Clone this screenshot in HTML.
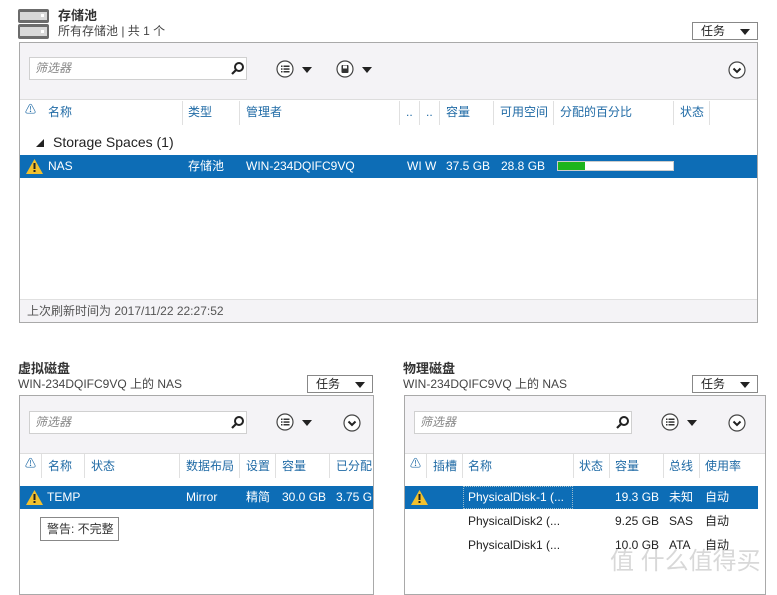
<!DOCTYPE html>
<html><head><meta charset="utf-8"><style>
*{margin:0;padding:0;box-sizing:border-box}
body{width:777px;height:582px;background:#fff;position:relative;overflow:hidden;font-family:"Liberation Sans","Noto Sans CJK SC",sans-serif;font-size:12px;line-height:15px;color:#222}
.a{position:absolute;white-space:nowrap}
.panel{position:absolute;border:1px solid #a9a9a9;background:#fff}
.tb{position:absolute;left:0;right:0;top:0;background:#f4f3f6;border-bottom:1px solid #ddd}
.filter{position:absolute;background:#fff;border:1px solid #d0d0d0;height:23px;color:#888;font-style:italic;padding:3px 0 0 5px;font-size:12px}
.hd{color:#1f6aa5;font-size:12px}
.sel{position:absolute;background:#0d6db6;height:23px;color:#fff}
.task{position:absolute;border:1px solid #888;height:18px;background:#fff;font-size:12px;line-height:15px;padding:1px 0 0 8px}
.task:after{content:"";position:absolute;right:7px;top:6px;border:5px solid transparent;border-top:6px solid #222;border-bottom:0}
.tri{position:absolute;border:5px solid transparent;border-top:6px solid #222;border-bottom:0}
.sep{position:absolute;width:1px;background:#e0e0e0}
</style></head><body>

<svg width="0" height="0" style="position:absolute"><defs>
<g id="list"><circle cx="9" cy="9" r="8" fill="#fff" stroke="#444" stroke-width="1.2"/><rect x="5" y="5.5" width="1.5" height="1.5" fill="#333"/><rect x="5" y="8.3" width="1.5" height="1.5" fill="#333"/><rect x="5" y="11" width="1.5" height="1.5" fill="#333"/><rect x="7.5" y="5.5" width="6" height="1.5" fill="#333"/><rect x="7.5" y="8.3" width="6" height="1.5" fill="#333"/><rect x="7.5" y="11" width="6" height="1.5" fill="#333"/></g>
<g id="down"><circle cx="9" cy="9" r="8" fill="#fff" stroke="#444" stroke-width="1.2"/><path d="M5.5 7.5L9 11L12.5 7.5" fill="none" stroke="#222" stroke-width="2"/></g>
<g id="save"><circle cx="9" cy="9" r="8" fill="#fff" stroke="#444" stroke-width="1.2"/><rect x="5.5" y="5" width="7" height="8" rx="1" fill="#333"/><rect x="7" y="5.5" width="4" height="3" fill="#fff"/></g>
<g id="mag"><circle cx="8" cy="5" r="4" fill="none" stroke="#222" stroke-width="2"/><line x1="5" y1="8" x2="1" y2="12" stroke="#222" stroke-width="2.2"/></g>
<g id="warn"><path d="M8.5 0L17 15H0Z" fill="#f2c12e"/><rect x="7.5" y="4" width="2" height="6" fill="#222"/><rect x="7.5" y="11" width="2" height="2" fill="#222"/></g>
</defs></svg>

<svg class="a" style="left:18px;top:8px" width="32" height="32" viewBox="0 0 32 32">
<rect x="0" y="1" width="31" height="14" rx="2" fill="#6b6b6b"/><rect x="2" y="4" width="27" height="8" fill="#d8d8d8"/><rect x="23" y="6" width="3" height="3" fill="#fff"/>
<rect x="0" y="16" width="31" height="15" rx="2" fill="#6b6b6b"/><rect x="2" y="19" width="27" height="9" fill="#d8d8d8"/><rect x="23" y="22" width="3" height="3" fill="#fff"/>
</svg>
<div class="a" style="left:58px;top:8px;font-size:13px;font-weight:bold;color:#333">存储池</div>
<div class="a" style="left:58px;top:24px;color:#444">所有存储池 | 共 1 个</div>
<div class="task" style="left:692px;top:22px;width:66px">任务</div>

<div class="panel" style="left:19px;top:42px;width:739px;height:281px">
 <div class="tb" style="height:57px"></div>
 <div class="filter" style="left:9px;top:14px;width:218px">筛选器</div>
 <svg class="a" style="left:211px;top:19px" width="14" height="14"><use href="#mag"/></svg>
 <svg class="a" style="left:256px;top:17px" width="18" height="18"><use href="#list"/></svg>
 <div class="tri" style="left:282px;top:24px"></div>
 <svg class="a" style="left:316px;top:17px" width="18" height="18"><use href="#save"/></svg>
 <div class="tri" style="left:342px;top:24px"></div>
 <svg class="a" style="left:708px;top:18px" width="18" height="18"><use href="#down"/></svg>
 <div class="a" style="left:5px;top:60px;font-size:11px;color:#1f6aa5">⚠</div>
 <div class="hd a" style="left:28px;top:62px">名称</div>
 <div class="sep" style="left:162px;top:58px;height:24px"></div>
 <div class="hd a" style="left:168px;top:62px">类型</div>
 <div class="sep" style="left:219px;top:58px;height:24px"></div>
 <div class="hd a" style="left:226px;top:62px">管理者</div>
 <div class="sep" style="left:379px;top:58px;height:24px"></div>
 <div class="hd a" style="left:386px;top:62px">..</div>
 <div class="sep" style="left:399px;top:58px;height:24px"></div>
 <div class="hd a" style="left:406px;top:62px">..</div>
 <div class="sep" style="left:419px;top:58px;height:24px"></div>
 <div class="hd a" style="left:426px;top:62px">容量</div>
 <div class="sep" style="left:473px;top:58px;height:24px"></div>
 <div class="hd a" style="left:480px;top:62px">可用空间</div>
 <div class="sep" style="left:533px;top:58px;height:24px"></div>
 <div class="hd a" style="left:540px;top:62px">分配的百分比</div>
 <div class="sep" style="left:653px;top:58px;height:24px"></div>
 <div class="hd a" style="left:660px;top:62px">状态</div>
 <div class="sep" style="left:689px;top:58px;height:24px"></div>
 <div class="a" style="left:16px;top:93px;font-size:8px">◢</div>
 <div class="a" style="left:33px;top:91px;font-size:14px;line-height:17px;color:#222">Storage Spaces (1)</div>
 <div class="sel" style="left:0;top:112px;width:737px">
  <svg class="a" style="left:6px;top:4px" width="17" height="15"><use href="#warn"/></svg>
  <div class="a" style="left:28px;top:4px">NAS</div>
  <div class="a" style="left:168px;top:4px">存储池</div>
  <div class="a" style="left:226px;top:4px">WIN-234DQIFC9VQ</div>
  <div class="a" style="left:387px;top:4px">WI W</div>
  <div class="a" style="left:426px;top:4px">37.5 GB</div>
  <div class="a" style="left:481px;top:4px">28.8 GB</div>
  <div class="a" style="left:537px;top:6px;width:117px;height:10px;background:#fff;border:1px solid #ccc"><div style="width:27px;height:8px;background:#1db51d"></div></div>
 </div>
 <div class="a" style="left:0;right:0;top:256px;height:23px;background:#f4f3f6;border-top:1px solid #e0e0e0"></div>
 <div class="a" style="left:7px;top:261px;color:#555">上次刷新时间为 2017/11/22 22:27:52</div>
</div>

<div class="a" style="left:18px;top:361px;font-size:13px;font-weight:bold;color:#333">虚拟磁盘</div>
<div class="a" style="left:18px;top:377px;color:#444">WIN-234DQIFC9VQ 上的 NAS</div>
<div class="task" style="left:307px;top:375px;width:66px">任务</div>
<div class="panel" style="left:19px;top:395px;width:355px;height:200px">
 <div class="tb" style="height:58px"></div>
 <div class="filter" style="left:9px;top:15px;width:218px">筛选器</div>
 <svg class="a" style="left:211px;top:20px" width="14" height="14"><use href="#mag"/></svg>
 <svg class="a" style="left:256px;top:17px" width="18" height="18"><use href="#list"/></svg>
 <div class="tri" style="left:282px;top:24px"></div>
 <svg class="a" style="left:323px;top:18px" width="18" height="18"><use href="#down"/></svg>
 <div class="a" style="left:5px;top:61px;font-size:11px;color:#1f6aa5">⚠</div>
 <div class="sep" style="left:21px;top:58px;height:24px"></div>
 <div class="hd a" style="left:28px;top:63px">名称</div>
 <div class="sep" style="left:64px;top:58px;height:24px"></div>
 <div class="hd a" style="left:71px;top:63px">状态</div>
 <div class="sep" style="left:159px;top:58px;height:24px"></div>
 <div class="hd a" style="left:166px;top:63px">数据布局</div>
 <div class="sep" style="left:219px;top:58px;height:24px"></div>
 <div class="hd a" style="left:226px;top:63px">设置</div>
 <div class="sep" style="left:255px;top:58px;height:24px"></div>
 <div class="hd a" style="left:262px;top:63px">容量</div>
 <div class="sep" style="left:309px;top:58px;height:24px"></div>
 <div class="hd a" style="left:316px;top:63px">已分配</div>
 <div class="sel" style="left:0;top:90px;width:353px">
  <svg class="a" style="left:6px;top:4px" width="17" height="15"><use href="#warn"/></svg>
  <div class="a" style="left:27px;top:4px">TEMP</div>
  <div class="a" style="left:166px;top:4px">Mirror</div>
  <div class="a" style="left:226px;top:4px">精简</div>
  <div class="a" style="left:262px;top:4px">30.0 GB</div>
  <div class="a" style="left:316px;top:4px">3.75 G</div>
 </div>
 <div class="a" style="left:20px;top:121px;width:79px;height:24px;border:1px solid #888;background:#fff;padding:4px 0 0 6px;color:#333">警告: 不完整</div>
</div>

<div class="a" style="left:403px;top:361px;font-size:13px;font-weight:bold;color:#333">物理磁盘</div>
<div class="a" style="left:403px;top:377px;color:#444">WIN-234DQIFC9VQ 上的 NAS</div>
<div class="task" style="left:692px;top:375px;width:66px">任务</div>
<div class="panel" style="left:404px;top:395px;width:362px;height:200px">
 <div class="tb" style="height:58px"></div>
 <div class="filter" style="left:9px;top:15px;width:218px">筛选器</div>
 <svg class="a" style="left:211px;top:20px" width="14" height="14"><use href="#mag"/></svg>
 <svg class="a" style="left:256px;top:17px" width="18" height="18"><use href="#list"/></svg>
 <div class="tri" style="left:282px;top:24px"></div>
 <svg class="a" style="left:323px;top:18px" width="18" height="18"><use href="#down"/></svg>
 <div class="a" style="left:5px;top:61px;font-size:11px;color:#1f6aa5">⚠</div>
 <div class="sep" style="left:21px;top:58px;height:24px"></div>
 <div class="hd a" style="left:28px;top:63px">插槽</div>
 <div class="sep" style="left:57px;top:58px;height:24px"></div>
 <div class="hd a" style="left:63px;top:63px">名称</div>
 <div class="sep" style="left:168px;top:58px;height:24px"></div>
 <div class="hd a" style="left:174px;top:63px">状态</div>
 <div class="sep" style="left:204px;top:58px;height:24px"></div>
 <div class="hd a" style="left:210px;top:63px">容量</div>
 <div class="sep" style="left:258px;top:58px;height:24px"></div>
 <div class="hd a" style="left:264px;top:63px">总线</div>
 <div class="sep" style="left:294px;top:58px;height:24px"></div>
 <div class="hd a" style="left:300px;top:63px">使用率</div>
 <div class="sel" style="left:0;top:90px;width:353px">
  <svg class="a" style="left:6px;top:4px" width="17" height="15"><use href="#warn"/></svg>
  <div class="a" style="left:58px;top:0;width:110px;height:23px;border:1px dotted #9bc"></div>
  <div class="a" style="left:63px;top:4px">PhysicalDisk-1 (...</div>
  <div class="a" style="left:210px;top:4px">19.3 GB</div>
  <div class="a" style="left:264px;top:4px">未知</div>
  <div class="a" style="left:300px;top:4px">自动</div>
 </div>
 <div class="a" style="left:63px;top:118px">PhysicalDisk2 (...</div>
 <div class="a" style="left:210px;top:118px">9.25 GB</div>
 <div class="a" style="left:264px;top:118px">SAS</div>
 <div class="a" style="left:300px;top:118px">自动</div>
 <div class="a" style="left:63px;top:142px">PhysicalDisk1 (...</div>
 <div class="a" style="left:210px;top:142px">10.0 GB</div>
 <div class="a" style="left:264px;top:142px">ATA</div>
 <div class="a" style="left:300px;top:142px">自动</div>
</div>
<div class="a" style="left:610px;top:548px;font-size:24px;line-height:28px;color:rgba(200,200,200,0.7)">值 什么值得买</div>
</body></html>
